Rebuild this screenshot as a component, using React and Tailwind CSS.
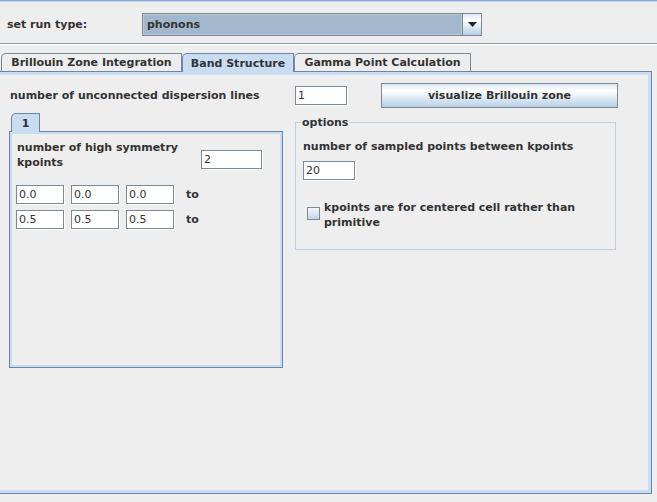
import React from 'react';

const FONT = { fontFamily: '"DejaVu Sans", "Liberation Sans", sans-serif' };

function Field({ value, w }) {
  return (
    <div className={`${w} h-[19px] bg-white border border-[#7a8a99] shadow-[1px_1px_0_#ffffff] pl-[2px] flex items-center font-normal text-[11px] text-[#333333] leading-none`}>
      {value}
    </div>
  );
}

function Tab({ label, selected, w }) {
  if (selected) {
    return (
      <div className={`${w} h-[19px] -mb-px relative z-10 bg-[#c8ddf2] border border-b-0 border-[#6f84a8] rounded-tl-[5px] flex items-center justify-center`}>
        {label}
      </div>
    );
  }
  return (
    <div className={`${w} h-[18px] bg-[#eeeeee] border border-b-0 border-[#7a8a99] rounded-tl-[5px] flex items-center justify-center`}>
      {label}
    </div>
  );
}

export default function App() {
  return (
    <div style={FONT} className="w-[657px] h-[502px] bg-[#eeeeee] overflow-hidden text-[11px] font-bold text-[#333333] leading-[15px]">
      <div className="h-px bg-[#8aa5d6]" />
      <div className="h-px bg-[#c6d6ee]" />

      {/* run type */}
      <div className="h-[41px] flex items-start pt-[11px]">
        <div className="w-[142px] pl-[7px] h-[23px] flex items-center">set run type:</div>
        <div className="w-[340px] h-[23px] border border-[#7a8a99] flex">
          <div className="flex-1 bg-[#a3b8cc] border border-[#b7c7d7] pl-[3px] flex items-center">phonons</div>
          <div className="w-[19px] border-l border-[#7a8a99] bg-[linear-gradient(to_bottom,#dde8f3,#ffffff_30%,#b8cfe5)] flex items-center justify-center">
            <svg width="9" height="5" viewBox="0 0 9 5"><polygon points="0,0 9,0 4.5,5" fill="#222" /></svg>
          </div>
        </div>
      </div>
      <div className="h-px bg-[#8c99a6]" />
      <div className="h-px bg-white" />
      <div className="h-[8px]" />

      {/* tabs */}
      <div className="h-[18px] flex items-end pl-[1px]">
        <Tab label="Brillouin Zone Integration" w="w-[181px]" />
        <Tab label="Band Structure" w="w-[112px]" selected />
        <Tab label="Gamma Point Calculation" w="w-[177px]" />
      </div>

      <div className="-ml-[4px] w-[656px] h-[423px] border border-[#6f84a8]">
        <div className="w-full h-full border-[3px] border-[#c8ddf2]">
          <div className="flex items-center h-[25px] mt-[8px]">
            <div className="ml-[10px] w-[285px]">number of unconnected dispersion lines</div>
            <Field value="1" w="w-[52px]" />
            <button className="ml-[34px] w-[237px] h-[25px] border border-[#7a8a99] bg-[linear-gradient(to_bottom,#dde8f3,#ffffff_30%,#b8cfe5)] font-bold text-[#333333]">
              visualize Brillouin zone
            </button>
          </div>

          <div className="flex items-start">
            <div className="ml-[9px] mt-[5px]">
              <div className="ml-[2px] h-[18px] flex items-end">
                <Tab label="1" w="w-[29px]" selected />
              </div>
              <div className="w-[274px] h-[237px] border border-[#6f84a8]">
                <div className="w-full h-full border-2 border-[#c8ddf2] pt-[6px]">
                  <div className="flex items-start">
                    <div className="pl-[5px] w-[189px]">number of high symmetry<br />kpoints</div>
                    <div className="mt-[10px]"><Field value="2" w="w-[61px]" /></div>
                  </div>
                  <div className="flex items-center pl-[4px] mt-[15px] gap-[7px]">
                    <Field value="0.0" w="w-[48px]" />
                    <Field value="0.0" w="w-[48px]" />
                    <Field value="0.0" w="w-[48px]" />
                    <span className="ml-[5px]">to</span>
                  </div>
                  <div className="flex items-center pl-[4px] mt-[6px] gap-[7px]">
                    <Field value="0.5" w="w-[48px]" />
                    <Field value="0.5" w="w-[48px]" />
                    <Field value="0.5" w="w-[48px]" />
                    <span className="ml-[5px]">to</span>
                  </div>
                </div>
              </div>
            </div>

            <div className="ml-[12px] mt-[14px] relative w-[321px] h-[128px] border border-[#b8cfe5]">
              <span className="absolute -top-[8px] left-[5px] px-[1px] bg-[#eeeeee]">options</span>
              <div className="pl-[7px] mt-[16px]">number of sampled points between kpoints</div>
              <div className="pl-[7px] mt-[7px]"><Field value="20" w="w-[52px]" /></div>
              <div className="flex items-start pl-[11px] mt-[20px]">
                <div className="mt-[7px] w-[13px] h-[13px] border border-[#7a8a99] bg-[linear-gradient(to_bottom,#f4f8fc,#c4d6ea)]" />
                <div className="ml-[4px]">kpoints are for centered cell rather than<br />primitive</div>
              </div>
            </div>
          </div>
        </div>
      </div>
    </div>
  );
}
